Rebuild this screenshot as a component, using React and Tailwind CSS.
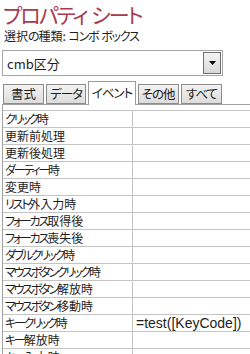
const ROWS = [
  ['クリック時', ''],
  ['更新前処理', ''],
  ['更新後処理', ''],
  ['ダーティー時', ''],
  ['変更時', ''],
  ['リスト外入力時', ''],
  ['フォーカス取得後', ''],
  ['フォーカス喪失後', ''],
  ['ダブルクリック時', ''],
  ['マウスボタンクリック時', ''],
  ['マウスボタン解放時', ''],
  ['マウスボタン移動時', ''],
  ['キークリック時', '=test([KeyCode])'],
  ['キー解放時', ''],
  ['キー入力時', ''],
]

const TABS = ['書式', 'データ', 'イベント', 'その他', 'すべて']

// kana runs are set tighter so they come out as narrow as the UI font in the shot
function Jp({ text, kana = 'tracking-[-2.2px]' }) {
  const parts = text.match(/[\u3040-\u30ff]+|[^\u3040-\u30ff]+/g) || []
  return parts.map((p, i) =>
    /[\u3040-\u30ff]/.test(p) ? <span key={i} className={kana}>{p}</span> : <span key={i}>{p}</span>
  )
}

export default function App() {
  return (
    <div className="w-[250px] h-[354px] overflow-hidden bg-white text-[#1e1e1e] font-['Noto_Sans_CJK_JP',sans-serif] [font-feature-settings:'palt']">
      <div className="pl-[3px] pt-[2px] h-[27px] text-[21px] leading-[25px] text-[#a83b4d] whitespace-nowrap">
        <Jp text="プロパティ シート" kana="tracking-[-2px]" />
      </div>
      <div className="pl-[4px] h-[18px] text-[12px] leading-[18px] whitespace-nowrap">
        <Jp text="選択の種類: コンボ ボックス" kana="tracking-[-1.2px]" />
      </div>

      <div className="mt-[5px] ml-[2px] w-[221px] h-[26px] border border-[#a5a5a5] flex items-center justify-between">
        <span className="pl-[4px] text-[13px] leading-none">cmb区分</span>
        <div className="mr-[1px] w-[18px] h-[22px] border border-[#6f6f6f] bg-gradient-to-b from-[#f4f4f4] to-[#d8d8d8] flex items-center justify-center">
          <svg width="7" height="4" viewBox="0 0 7 4"><path d="M0 0h7L3.5 4z" fill="#000" /></svg>
        </div>
      </div>

      <div className="mt-[5px] pl-[3px] h-[23px] flex items-end gap-[2px]">
        {TABS.map((t, i) =>
          i === 2 ? (
            <div key={t} className="relative z-10 w-[48px] h-[24px] -mb-px bg-white border border-b-0 border-[#9a9a9a] flex items-center justify-center text-[12.5px] leading-none whitespace-nowrap">
              <Jp text={t} kana="tracking-[-1px]" />
            </div>
          ) : (
            <div key={t} className={`${i === 1 ? 'w-[40px]' : 'w-[41px]'} h-[20px] border border-[#8c8c8c] bg-gradient-to-b from-[#f3f3f3] to-[#dcdcdc] flex items-center justify-center text-[12.5px] leading-none whitespace-nowrap`}>
              <Jp text={t} kana="tracking-[-1px]" />
            </div>
          )
        )}
      </div>

      <div className="ml-[2px] border-t border-l border-[#a0a0a0] pt-[5px]">
        <div className="border-t border-[#c4c4c4]">
          {ROWS.map(([k, v]) => (
            <div key={k} className="h-[17px] flex border-b border-[#c4c4c4]">
              <div className="w-[130px] shrink-0 border-r border-[#c4c4c4] pl-[2px] text-[12px] leading-[16px] whitespace-nowrap">
                <Jp text={k} />
              </div>
              <div className="pl-[3px] text-[14px] leading-[16px] whitespace-nowrap font-['Liberation_Sans',sans-serif]">{v}</div>
            </div>
          ))}
        </div>
      </div>
    </div>
  )
}
